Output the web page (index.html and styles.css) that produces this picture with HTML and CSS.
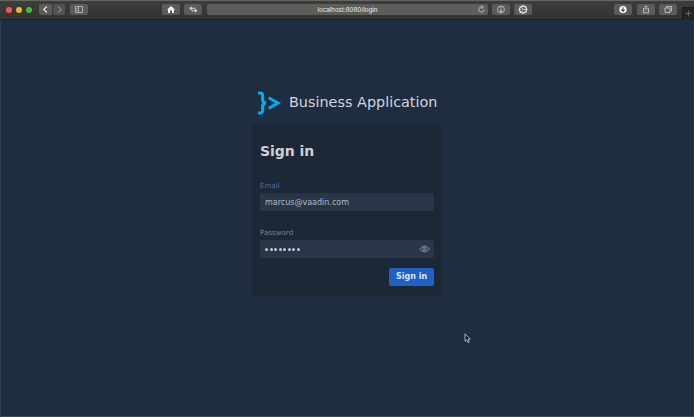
FILE: index.html
```html
<!DOCTYPE html>
<html lang="en">
<head>
<meta charset="utf-8">
<title>Business Application</title>
<link rel="stylesheet" href="styles.css">
</head>
<body>
<div class="window">
  <header class="toolbar">
    <div class="lights"><i class="red"></i><i class="yellow"></i><i class="green"></i></div>
    <div class="nav">
      <span class="btn back"><svg width="13" height="11" viewBox="0 0 13 11"><path d="M7.8 2.5 4.8 5.5l3 3" stroke="#e2e2e0" stroke-width="1.3"/></svg></span>
      <span class="btn fwd"><svg width="13" height="11" viewBox="0 0 13 11"><path d="M5.2 2.5l3 3-3 3" stroke="#8b8c8a" stroke-width="1.1"/></svg></span>
    </div>
    <span class="btn sidebar"><svg width="18" height="11" viewBox="0 0 18 11"><path d="M5.5 2.5h7v6h-7zM8.5 2.5v6M6.2 4.5h1.3M6.2 6.5h1.3" stroke="#c0c1bf" stroke-width=".8"/></svg></span>
    <div class="pair tools">
      <span class="btn"><svg width="18" height="11" viewBox="0 0 18 11"><path d="M5 5.5 9 2l4 3.5H12V9H10V6.5H8V9H6V5.5z" fill="#f0f0ef"/></svg></span>
      <span class="btn"><svg width="18" height="11" viewBox="0 0 18 11"><path d="M6 4.3h5M7.5 2.8 6 4.3l1.5 1.5M7.5 6.7h5M11 5.2l1.5 1.5L11 8.2" stroke="#deded9" stroke-width="1.1"/></svg></span>
    </div>
    <div class="address"><span class="url">localhost:8080/login</span>
      <svg class="reload" width="9" height="9" viewBox="0 0 9 9"><path d="M5.7 2.1A2.7 2.7 0 1 0 7.2 4.7M4.2.5l2 1.7-2 1.5" stroke="#c8c9c7" stroke-width=".85"/></svg>
    </div>
    <div class="pair extensions">
      <span class="btn"><svg width="18" height="11" viewBox="0 0 18 11"><circle cx="9" cy="5.5" r="3.4" stroke="#d2d3d1" stroke-width=".8"/><path d="M9 5v2.5M9 3.2v1M8.2 7.4h1.6" stroke="#e4e4e2" stroke-width=".9"/></svg></span>
      <span class="btn"><svg width="18" height="11" viewBox="0 0 18 11"><circle cx="9" cy="5.5" r="3.4" stroke="#e8e8e7" stroke-width="1.3"/><path d="M9 5.5h3M9 5.5 7.4 2.8M9 5.5 7.4 8.2M9 .8v1M9 9.2v1M4.3 5.5h1M12.7 5.5h1M5.6 2.1l.8.8M11.6 8.1l.8.8M5.6 8.9l.8-.8M11.6 2.9l.8-.8" stroke="#e0e0de" stroke-width=".8"/></svg></span>
    </div>
    <div class="pair actions">
      <span class="btn"><svg width="18" height="11" viewBox="0 0 18 11"><circle cx="9" cy="5.5" r="3.6" fill="#fff"/><path d="M9 3.2v4M7.4 5.7 9 7.3l1.6-1.6" stroke="#3d3e3c" stroke-width="1.1"/></svg></span>
      <span class="btn"><svg width="18" height="11" viewBox="0 0 18 11"><path d="M7.8 4.5H6.5v4.3h5V4.5h-1.3M9 6.5V1.8M7.6 3.2 9 1.8l1.4 1.4" stroke="#cfd0ce" stroke-width=".8"/></svg></span>
      <span class="btn"><svg width="18" height="11" viewBox="0 0 18 11"><path d="M7.5 4V2.5h5v4.5H11M6 4h5v4.5H6z" stroke="#cfd0ce" stroke-width=".8"/></svg></span>
    </div>
    <span class="newtab"><svg width="12" height="12" viewBox="0 0 12 12"><path d="M2.5 5.5h6M5.5 2.5v6" stroke="#747573" stroke-width=".8"/></svg></span>
  </header>
  <main class="page">
    <div class="brand">
      <svg class="logo" width="24" height="24" viewBox="0 0 24 24"><path d="M1 1.9h2Q5.6 1.9 5.6 4.5V8.8Q5.6 12 9.2 12Q5.6 12 5.6 15.2V19.5Q5.6 22.1 3 22.1H1" stroke-width="3"/><path d="M11.7 6.8 21 12l-9.3 5.2" stroke-width="3"/></svg>
      <span class="name">Business Application</span>
    </div>
    <form class="card">
      <h1>Sign in</h1>
      <label class="active" for="email">Email</label>
      <div class="field"><input id="email" type="text" value="marcus@vaadin.com"></div>
      <label class="second" for="password">Password</label>
      <div class="field"><span class="dots" id="password"><i></i><i></i><i></i><i></i><i></i><i></i><i></i><i></i></span>
        <svg class="eye" width="11" height="8" viewBox="0 0 11 8"><path d="M.6 4Q5.5-2 10.4 4Q5.5 10 .6 4z" stroke-width=".9"/><circle cx="5.5" cy="4" r="1.8" stroke-width=".9"/><circle cx="5.5" cy="4" r=".5" stroke-width=".6"/></svg>
      </div>
      <button type="button">Sign in</button>
    </form>
  </main>
  <svg class="cursor" width="8" height="11" viewBox="0 0 8 11"><path d="M1 .8v7.4l1.7-1.5 1.2 2.8 1.4-.6-1.2-2.7h2.2z" fill="#101418" stroke="#d5dadd" stroke-width=".8"/></svg>
</div>
</body>
</html>
```
FILE: styles.css
```css
* { box-sizing: border-box; }
body { margin: 0; background: #1f2d40; font-family: "DejaVu Sans", Verdana, sans-serif; }
svg { display: block; fill: none; flex: none; }
.window {
  position: relative;
  height: 417px;
  overflow: hidden;
  display: flex;
  flex-direction: column;
  box-shadow: inset 1px 0 #2c3b4f, inset -1px 0 #2c3b4f, inset 0 -1px #3b4a5d;
}
.toolbar {
  flex: none;
  display: flex;
  align-items: flex-start;
  height: 20px;
  padding: 3px 0 0 6px;
  background: linear-gradient(#3d3e3c, #333431);
  border-top: 1px solid #666765;
  border-bottom: 1px solid #1b222b;
}
.lights { display: flex; gap: 4px; padding-top: 3px; }
.lights i { width: 6px; height: 6px; border-radius: 50%; }
.red { background: #fa5650; }
.yellow { background: #e5b92c; }
.green { background: #44c12e; }
.btn { width: 18px; height: 11px; background: #5b5c5a; border-radius: 2px; flex: none; }
.nav { display: flex; gap: 1px; margin-left: 7px; }
.nav .btn { width: 12.5px; }
.nav .fwd { background: #51524f; }
.sidebar { margin-left: 5px; }
.pair { display: flex; gap: 4px; flex: none; }
.tools { margin-left: 74px; }
.address {
  display: flex;
  align-items: center;
  width: 281px;
  height: 11px;
  margin-left: 5px;
  padding: 0 2px 0 11px;
  background: #5d5e5c;
  border-radius: 2px;
}
.url { flex: 1; text-align: center; color: #eeeeed; font: 6.2px/11px Inter, "Open Sans", sans-serif; }
.extensions { margin-left: 4px; }
.actions { margin-left: 82px; gap: 4.5px; }
.newtab { margin-left: auto; margin-top: 3px; width: 12px; height: 13px; background: #252624; border-left: 1px solid #1c1d1b; border-top: 1px solid #1c1d1b; }
.page { flex: 1; display: flex; flex-direction: column; align-items: center; padding-top: 71px; }
.brand { display: flex; align-items: center; width: 182px; height: 24px; }
.logo { stroke: #00aeef; margin-left: .5px; }
.name { margin: -2px 0 0 8.5px; white-space: nowrap; color: #ced6df; font-size: 14.4px; line-height: 24px; }
.card {
  display: flex;
  flex-direction: column;
  width: 190px;
  height: 171px;
  margin-top: 10px;
  padding: 16px 8px 0;
  background: #1c2836;
  border-radius: 2px;
}
h1 { margin: 0; color: #cdd1d5; font-size: 14px; line-height: 20px; letter-spacing: -.05px; }
label { margin-top: 20px; color: #74808e; font-size: 7.1px; line-height: 10px; }
label.active { color: #4472bd; }
label.second { margin-top: 17px; }
.field { display: flex; align-items: center; width: 174px; height: 18px; margin-top: 2px; padding: 0 4px 0 5px; background: #283648; border-radius: 2px; }
input { width: 150px; height: 18px; padding: 1px 0 0; border: 0; outline: 0; background: none; color: #b2bac3; font: 8px/17px "DejaVu Sans", Verdana, sans-serif; }
.dots { display: flex; gap: 1.5px; flex: 1; }
.dots i { width: 3px; height: 3px; border-radius: 50%; background: #c2c9d0; }
.eye { stroke: #8792a0; }
button { align-self: flex-end; width: 45px; height: 18px; margin-top: 10px; padding: 0; border: 0; border-radius: 2px; background: #2160c5; color: #dde6f4; font: bold 8px/18px "DejaVu Sans", Verdana, sans-serif; }
.cursor { position: absolute; left: 464px; top: 333px; }
```
